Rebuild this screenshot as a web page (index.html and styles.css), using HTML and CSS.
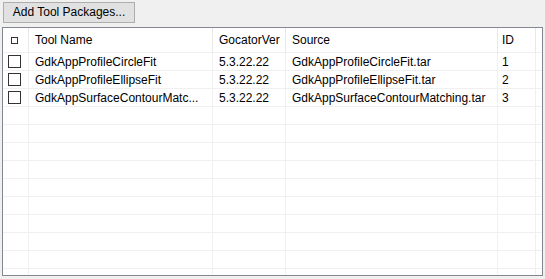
FILE: index.html
```html
<!DOCTYPE html>
<html lang="en">
<head>
    <meta charset="UTF-8">
    <meta name="viewport" content="width=device-width, initial-scale=1.0">
    <title>Tool Packages</title>
    <link rel="stylesheet" href="styles.css">
</head>
<body>
    <div class="toolbar">
        <button type="button" class="add-button">Add Tool Packages...</button>
    </div>

    <div class="grid-frame">
        <table class="package-grid">
            <colgroup>
                <col class="col-check">
                <col class="col-name">
                <col class="col-ver">
                <col class="col-source">
                <col class="col-id">
                <col class="col-rest">
            </colgroup>
            <thead>
                <tr>
                    <th class="check-cell"><span class="mini-box"></span></th>
                    <th>Tool Name</th>
                    <th>GocatorVer</th>
                    <th>Source</th>
                    <th class="id-cell">ID</th>
                    <th class="rest-cell"></th>
                </tr>
            </thead>
            <tbody>
                <tr>
                    <td class="check-cell"><span class="box"></span></td>
                    <td>GdkAppProfileCircleFit</td>
                    <td>5.3.22.22</td>
                    <td>GdkAppProfileCircleFit.tar</td>
                    <td class="id-cell">1</td>
                    <td class="rest-cell"></td>
                </tr>
                <tr>
                    <td class="check-cell"><span class="box"></span></td>
                    <td>GdkAppProfileEllipseFit</td>
                    <td>5.3.22.22</td>
                    <td>GdkAppProfileEllipseFit.tar</td>
                    <td class="id-cell">2</td>
                    <td class="rest-cell"></td>
                </tr>
                <tr>
                    <td class="check-cell"><span class="box"></span></td>
                    <td>GdkAppSurfaceContourMatc...</td>
                    <td>5.3.22.22</td>
                    <td>GdkAppSurfaceContourMatching.tar</td>
                    <td class="id-cell">3</td>
                    <td class="rest-cell"></td>
                </tr>
                <!-- empty rows to fill the grid -->
                <tr><td></td><td></td><td></td><td></td><td></td><td class="rest-cell"></td></tr>
                <tr><td></td><td></td><td></td><td></td><td></td><td class="rest-cell"></td></tr>
                <tr><td></td><td></td><td></td><td></td><td></td><td class="rest-cell"></td></tr>
                <tr><td></td><td></td><td></td><td></td><td></td><td class="rest-cell"></td></tr>
                <tr><td></td><td></td><td></td><td></td><td></td><td class="rest-cell"></td></tr>
                <tr><td></td><td></td><td></td><td></td><td></td><td class="rest-cell"></td></tr>
                <tr><td></td><td></td><td></td><td></td><td></td><td class="rest-cell"></td></tr>
                <tr><td></td><td></td><td></td><td></td><td></td><td class="rest-cell"></td></tr>
                <tr><td></td><td></td><td></td><td></td><td></td><td class="rest-cell"></td></tr>
                <tr><td></td><td></td><td></td><td></td><td></td><td class="rest-cell"></td></tr>
                <tr><td></td><td></td><td></td><td></td><td></td><td class="rest-cell"></td></tr>
                <tr><td></td><td></td><td></td><td></td><td></td><td class="rest-cell"></td></tr>
            </tbody>
        </table>
    </div>
</body>
</html>
```

FILE: styles.css
```css
* {
    box-sizing: border-box;
    margin: 0;
    padding: 0;
}

body {
    font-family: "Liberation Sans", Arial, sans-serif;
    font-size: 12px;
    color: #000;
    background-color: #f0f0f0;
    width: 545px;
    height: 279px;
    overflow: hidden;
}

.toolbar {
    padding: 2px 0 0 3px;
    height: 27px;
}

.add-button {
    width: 132px;
    height: 21px;
    font-family: inherit;
    font-size: 12px;
    color: #000;
    background-color: #e1e1e1;
    border: 1px solid #adadad;
    padding: 0 0 1px 0;
}

.grid-frame {
    margin-left: 2px;
    width: 541px;
    height: 249px;
    border: 1px solid #828790;
    background-color: #fff;
    overflow: hidden;
}

.package-grid {
    border-collapse: separate;
    border-spacing: 0;
    table-layout: fixed;
    width: 539px;
}

.col-check { width: 26px; }
.col-name { width: 184px; }
.col-ver { width: 73px; }
.col-source { width: 212px; }
.col-id { width: 38px; }
.col-rest { width: 6px; }

.package-grid th,
.package-grid td {
    border-right: 1px solid #f0f0f0;
    border-bottom: 1px solid #f0f0f0;
    text-align: left;
    font-weight: normal;
    white-space: nowrap;
    overflow: hidden;
    padding-left: 6px;
    vertical-align: middle;
}

.package-grid th {
    height: 25px;
    line-height: 23px;
    border-right-color: #e8e8e8;
}

.package-grid td {
    height: 18px;
    line-height: 16px;
}

.package-grid .id-cell {
    padding-left: 4px;
}

.package-grid .rest-cell {
    border-right: none;
    padding: 0;
}

.package-grid .check-cell {
    padding-left: 5px;
}

.box {
    display: block;
    width: 13px;
    height: 13px;
    border: 1px solid #333;
    background-color: #fff;
}

.mini-box {
    display: block;
    width: 7px;
    height: 7px;
    margin-left: 3px;
    border: 1px solid #333;
}
```
